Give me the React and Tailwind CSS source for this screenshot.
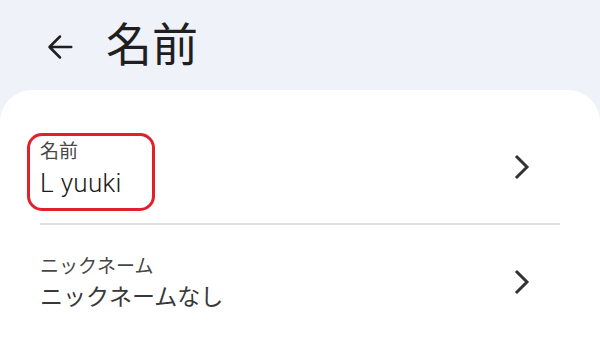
function Chevron() {
    return (
        <svg width="16" height="26" viewBox="0 0 16 26" fill="none" className="shrink-0">
            <path d="M3 3 L13 13 L3 23" stroke="#333333" strokeWidth="3" strokeLinecap="square" strokeLinejoin="miter" />
        </svg>
    );
}

function Row({ label, value, latin = false, highlight = false }) {
    return (
        <div className="relative flex h-[113px] items-center justify-between">
            <div className="flex flex-col pt-[4px]">
                <span className="text-[19px] leading-6 text-[#474747]">{label}</span>
                <span
                    className={
                        latin
                            ? "mt-[4px] text-[26px] font-light leading-[30px] tracking-[0.3px] text-[#1a1a1a]"
                            : "mt-[4px] text-[23px] leading-[30px] text-[#383838]"
                    }
                >
                    {value}
                </span>
            </div>
            <div className="mr-[30px]">
                <Chevron />
            </div>
            {highlight && (
                <div className="absolute left-[-13px] top-[23px] h-[78px] w-[128px] rounded-[15px] border-[3px] border-[#e1202b]" />
            )}
        </div>
    );
}

export default function App() {
    return (
        <div
            className="flex h-[350px] w-[600px] flex-col overflow-hidden bg-[#eff2f8]"
            style={{ fontFamily: 'Roboto, "Noto Sans CJK JP", sans-serif' }}
        >
            <header className="flex h-[90px] shrink-0 items-center pl-[42px]">
                <svg width="36" height="36" viewBox="0 0 24 24" fill="none" className="mt-[3px]">
                    <path d="M19.5 12H5.2M12 5l-7 7 7 7" stroke="#1f1f1f" strokeWidth="1.7" strokeLinecap="round" strokeLinejoin="round" />
                </svg>
                <h1 className="ml-[28px] text-[46px] leading-none text-[#1f1f1f]">名前</h1>
            </header>
            <main className="flex-1 rounded-t-[32px] bg-white px-10 pt-5">
                <Row label="名前" value="L yuuki" latin highlight />
                <div className="h-[2px] bg-[#e0e0e0]" />
                <Row label="ニックネーム" value="ニックネームなし" />
            </main>
        </div>
    );
}
